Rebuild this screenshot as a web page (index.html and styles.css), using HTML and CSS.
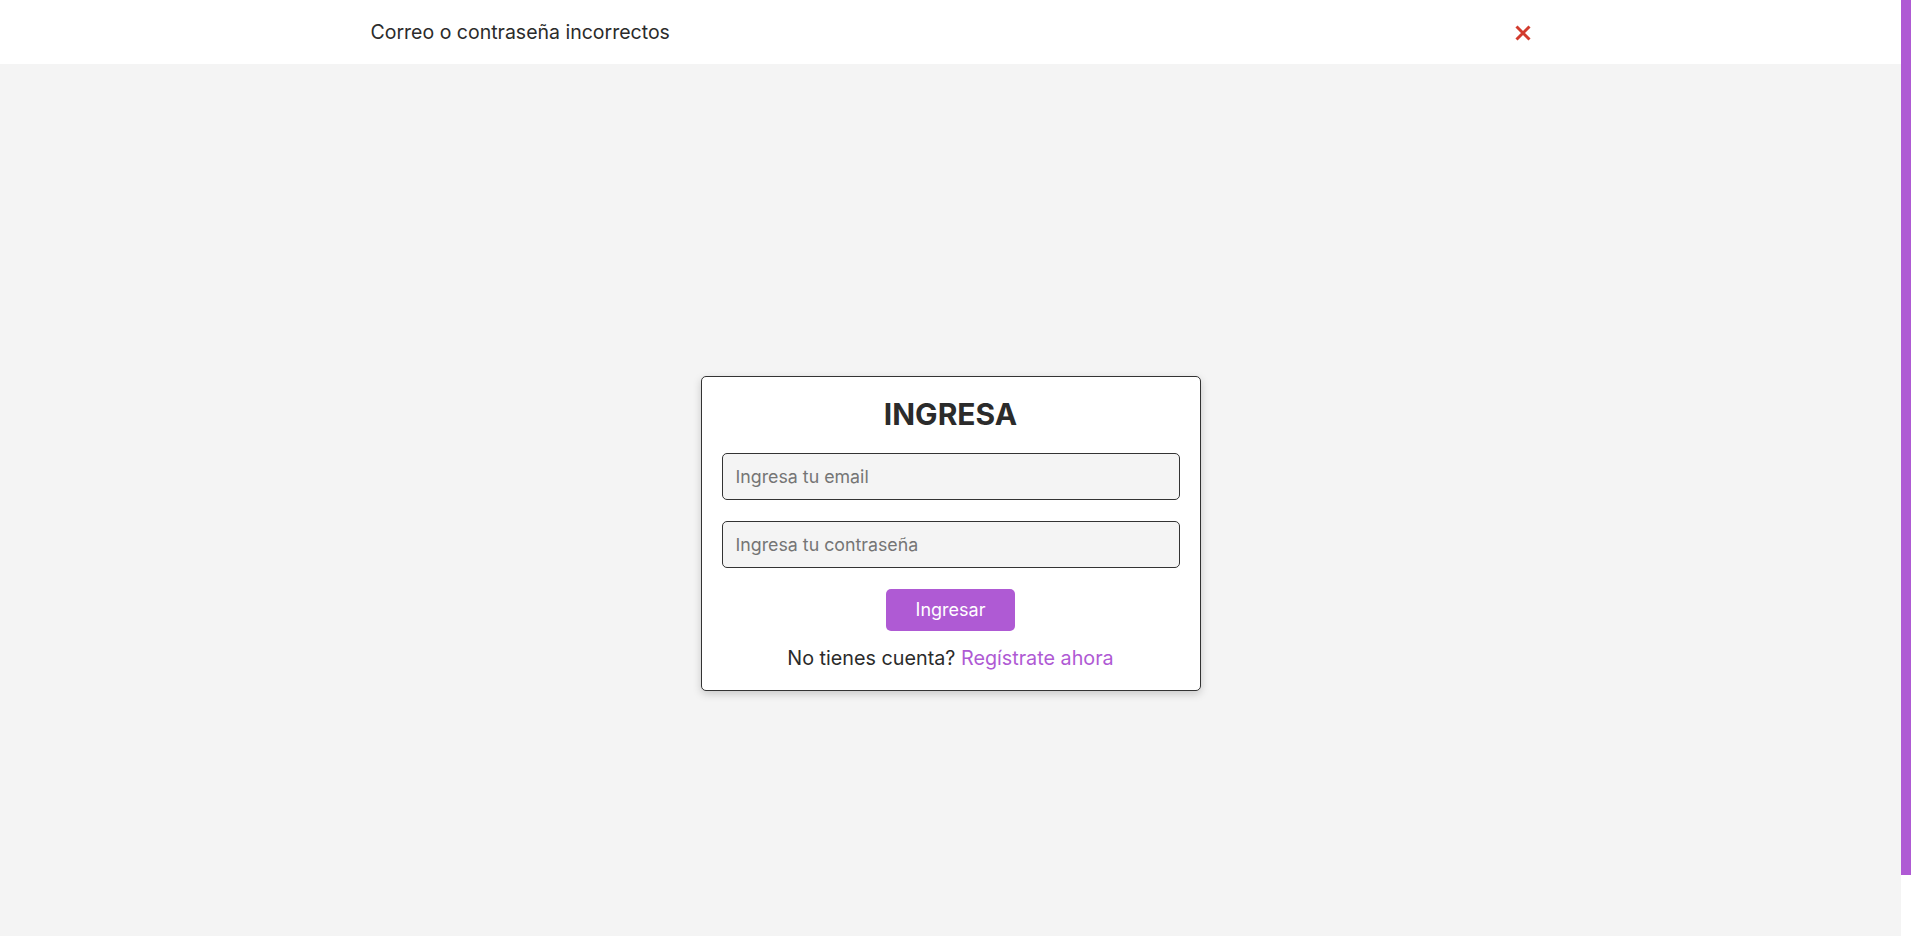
FILE: index.html
```html
<!DOCTYPE html>
<html lang="es">
<head>
<meta charset="utf-8">
<title>Ingresa</title>
<link rel="stylesheet" href="styles.css">
</head>
<body>
<div class="page">
  <div class="app">
    <header class="alert">
      <div class="alert-inner">
        <span class="alert-text">Correo o contraseña incorrectos</span>
        <button class="alert-close" aria-label="Cerrar">
          <svg width="18" height="18" viewBox="0 0 18 18"><path d="M2.5 2.5 L15.5 15.5 M15.5 2.5 L2.5 15.5" stroke="#d23b2e" stroke-width="3" stroke-linecap="butt"/></svg>
        </button>
      </div>
    </header>
    <main class="main">
      <form class="card">
        <h1 class="title">INGRESA</h1>
        <input class="field" type="email" placeholder="Ingresa tu email">
        <input class="field" type="password" placeholder="Ingresa tu contraseña">
        <button class="submit" type="button">Ingresar</button>
        <p class="signup">No tienes cuenta? <a href="#" class="link">Regístrate ahora</a></p>
      </form>
    </main>
  </div>
  <div class="scrollbar"><div class="thumb"></div></div>
</div>
</body>
</html>
```

FILE: styles.css
```css
* { box-sizing: border-box; }
html, body {
  margin: 0;
  padding: 0;
  height: 936px;
  overflow: hidden;
  font-family: Inter, "Noto Sans", sans-serif;
  color: #2b2b2b;
}
.page {
  display: flex;
  height: 936px;
  overflow: hidden;
}
.app {
  flex: 1;
  display: flex;
  flex-direction: column;
  background: #f4f4f4;
  height: 1000px;
  flex-shrink: 0;
}
.scrollbar {
  width: 10px;
  background: #ffffff;
  height: 936px;
}
.thumb {
  height: 875px;
  background: #af5ad4;
}
.alert {
  height: 64px;
  background: #ffffff;
  display: flex;
  justify-content: center;
}
.alert-inner {
  width: 1160px;
  display: flex;
  align-items: center;
  justify-content: space-between;
}
.alert-text {
  font-size: 19.5px;
  color: #2b2b2b;
}
.alert-close {
  border: 0;
  background: none;
  padding: 0;
  margin-right: -1px;
  width: 18px;
  height: 18px;
  display: flex;
  margin-top: 2px;
}
.main {
  flex: 1;
  display: flex;
  align-items: center;
  justify-content: center;
  padding-top: 2px;
}
.card {
  width: 500px;
  background: #ffffff;
  border: 1px solid #333;
  border-radius: 5px;
  box-shadow: 0 3px 8px rgba(0,0,0,0.18);
  padding: 18px 20px 17px;
  display: flex;
  flex-direction: column;
  align-items: center;
}
.title {
  margin: 0 0 20px;
  font-size: 30px;
  line-height: 38px;
  font-weight: 700;
  color: #2b2b2b;
}
.field {
  width: 100%;
  height: 47px;
  background: #f4f4f4;
  border: 1px solid #333;
  border-radius: 5px;
  padding: 0 13px;
  font-family: inherit;
  font-size: 17.8px;
  color: #2b2b2b;
  margin-bottom: 21px;
}
.field::placeholder { color: #757575; }
.submit {
  width: 129px;
  height: 42px;
  border: 0;
  border-radius: 5px;
  background: #af5ad4;
  color: #ffffff;
  font-family: inherit;
  font-size: 18px;
  margin-bottom: 12px;
}
.signup {
  margin: 0;
  font-size: 19.75px;
  line-height: 30px;
  color: #2b2b2b;
}
.link {
  color: #af5ad4;
  text-decoration: none;
}
```
